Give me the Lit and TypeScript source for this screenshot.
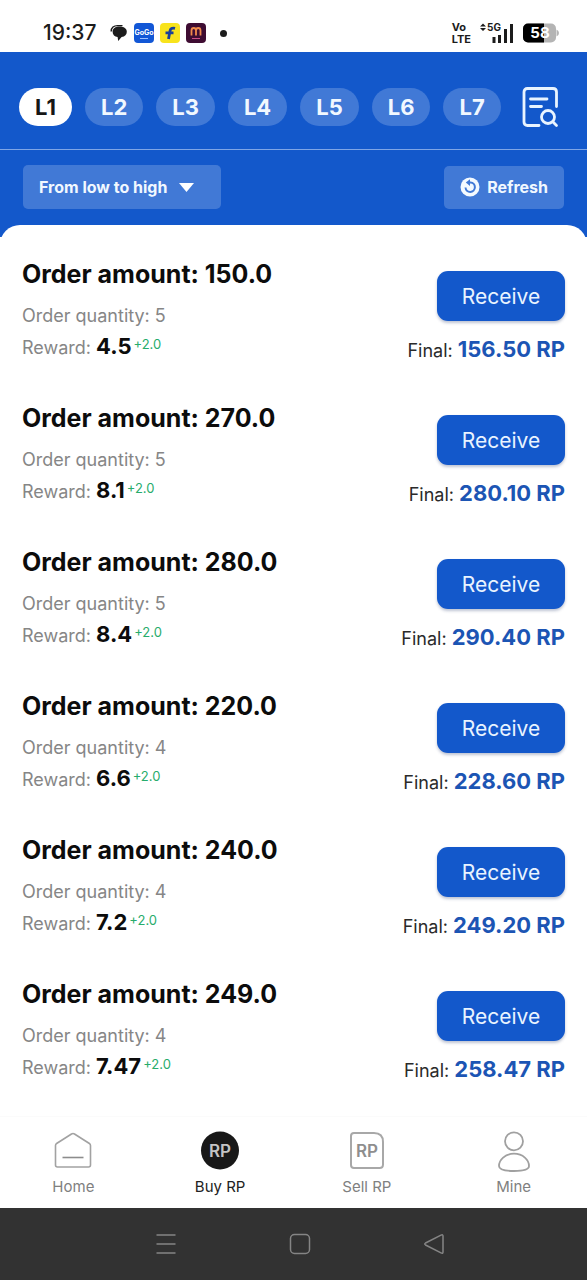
import { LitElement, html, css, svg } from "lit";
import { customElement, property, state } from "lit/decorators.js";
import { classMap } from "lit/directives/class-map.js";

interface Order {
  amount: string;
  quantity: number;
  reward: string;
  bonus: string;
  final: string;
}

const LEVELS = ["L1", "L2", "L3", "L4", "L5", "L6", "L7"];

const ORDERS: Order[] = [
  { amount: "150.0", quantity: 5, reward: "4.5", bonus: "+2.0", final: "156.50 RP" },
  { amount: "270.0", quantity: 5, reward: "8.1", bonus: "+2.0", final: "280.10 RP" },
  { amount: "280.0", quantity: 5, reward: "8.4", bonus: "+2.0", final: "290.40 RP" },
  { amount: "220.0", quantity: 4, reward: "6.6", bonus: "+2.0", final: "228.60 RP" },
  { amount: "240.0", quantity: 4, reward: "7.2", bonus: "+2.0", final: "249.20 RP" },
  { amount: "249.0", quantity: 4, reward: "7.47", bonus: "+2.0", final: "258.47 RP" },
];

@customElement("status-bar")
export class StatusBar extends LitElement {
  static styles = css`
    :host {
      display: flex;
      align-items: center;
      justify-content: space-between;
      height: 52px;
      padding: 14px 28px 0 43px;
      box-sizing: border-box;
      background: #fff;
      color: #1c1c1c;
    }
    .group {
      display: flex;
      align-items: center;
      gap: 6px;
    }
    .signals {
      gap: 8px;
    }
    .time {
      font-size: 21px;
      line-height: 24px;
      font-weight: 500;
      margin-right: 8px;
    }
    .dot {
      width: 7px;
      height: 7px;
      border-radius: 50%;
      background: #1c1c1c;
      margin-left: 8px;
    }
    .volte {
      display: flex;
      flex-direction: column;
      font-size: 11px;
      line-height: 12px;
      font-weight: 700;
    }
    svg {
      display: block;
    }
    text {
      font-family: Inter, sans-serif;
      font-weight: 700;
    }
  `;

  render() {
    return html`
      <div class="group">
        <span class="time">19:37</span>
        <svg width="18" height="20" viewBox="0 0 18 20" aria-hidden="true">
          <path d="M1.200 8.500C1 4.500 4 2.600 7.500 2.600h5" fill="none" stroke="#1c1c1c" stroke-width="1.400" />
          <path d="M9.500 3.600C5 3.600 2.600 5.800 2.600 8.800c0 3 2 5 5 5.300L8.200 18l3.400-3.900c3.400-.4 5.200-2.600 5.200-5.300 0-3-2.800-5.200-7.300-5.200z" fill="#1c1c1c" />
        </svg>
        <svg width="20" height="20" viewBox="0 0 20 20" aria-hidden="true">
          <rect width="20" height="20" rx="4" fill="#1257d6" />
          <text x="10" y="12" font-size="7" text-anchor="middle" fill="#fff">GoGo</text>
          <path d="M6 15.500h8" stroke="#9fc0ff" stroke-width="1" />
        </svg>
        <svg width="20" height="20" viewBox="0 0 20 20" aria-hidden="true">
          <rect width="20" height="20" rx="4" fill="#f8e31c" />
          <path d="M15 5.300C12 4.500 10.500 5.500 10 8L8.500 16M5.500 9.800h8" fill="none" stroke="#173f9b" stroke-width="2.800" />
        </svg>
        <svg width="20" height="20" viewBox="0 0 20 20" aria-hidden="true">
          <rect width="20" height="20" rx="4" fill="#3e0c32" />
          <path d="M5.500 12.500V7.500Q5.500 5 7.750 5T10 7.500V12.500M10 7.500Q10 5 12.250 5T14.500 7.500V12.500" fill="none" stroke="#f08a4b" stroke-width="1.800" />
          <path d="M6 15.500h8" stroke="#c94f86" stroke-width="1" />
        </svg>
        <span class="dot"></span>
      </div>
      <div class="group signals">
        <span class="volte"><span>Vo</span><span>LTE</span></span>
        <svg width="36" height="22" viewBox="0 0 36 22" aria-hidden="true">
          <path d="M4 1.500L7 4.500H1zM4 9L1 6H7z" fill="#1c1c1c" />
          <text x="8" y="9" font-size="10" fill="#1c1c1c">5G</text>
          <path d="M15 21v-6M20.500 21v-8M26.500 21V7M32.500 21V2" stroke="#1c1c1c" stroke-width="3" />
        </svg>
        <svg width="36" height="20" viewBox="0 0 36 20" aria-hidden="true">
          <rect x="0" y="0.500" width="33" height="19" rx="5" fill="#b4b4b4" />
          <path d="M33.500 6.500q2.500 1 2.500 3.500t-2.500 3.500z" fill="#b4b4b4" />
          <path d="M5 .5h16v19H5a5 5 0 0 1-5-5v-9a5 5 0 0 1 5-5z" fill="#000" />
          <text x="17" y="15" font-size="15" text-anchor="middle" fill="#fff">58</text>
        </svg>
      </div>
    `;
  }
}

@customElement("order-row")
export class OrderRow extends LitElement {
  @property({ attribute: false }) order!: Order;

  static styles = css`
    :host {
      display: flex;
      justify-content: space-between;
    }
    .info,
    .action {
      display: flex;
      flex-direction: column;
    }
    .title {
      margin: 0 0 10px;
      font-size: 25px;
      line-height: 32px;
      font-weight: 700;
      color: #0c0c0c;
    }
    .line {
      margin: 0;
      font-size: 18px;
      line-height: 32px;
      color: #868686;
    }
    .reward {
      font-size: 22px;
      line-height: 24px;
      font-weight: 700;
      color: #0c0c0c;
    }
    .bonus {
      margin-left: 2px;
      font-size: 13px;
      line-height: 16px;
      vertical-align: 5px;
      color: #27ac6c;
    }
    .action {
      align-items: flex-end;
      padding-top: 13px;
      gap: 14px;
    }
    .receive {
      width: 128px;
      height: 50px;
      border: 0;
      padding: 0;
      border-radius: 11px;
      background: #1358cb;
      box-shadow: 0 2px 3px rgba(40, 60, 110, 0.3);
      color: #e9f3ff;
      font: inherit;
      font-size: 21px;
      cursor: pointer;
    }
    .final {
      margin: 0;
      font-size: 18px;
      line-height: 32px;
      color: #2a2a2a;
    }
    .total {
      font-size: 22px;
      line-height: 24px;
      font-weight: 700;
      color: #1c55b4;
    }
  `;

  render() {
    const o = this.order;
    return html`
      <div class="info">
        <h2 class="title">Order amount: ${o.amount}</h2>
        <p class="line">Order quantity: ${o.quantity}</p>
        <p class="line">
          Reward: <span class="reward">${o.reward}</span><span class="bonus">${o.bonus}</span>
        </p>
      </div>
      <div class="action">
        <button class="receive" type="button">Receive</button>
        <p class="final">Final: <span class="total">${o.final}</span></p>
      </div>
    `;
  }
}

const NAV = [
  {
    label: "Home",
    icon: svg`<path d="M3.500 15.500Q3.500 14.200 4.600 13.500L19.500 4Q21 3.100 22.500 4L37.400 13.500Q38.500 14.200 38.500 15.500V35Q38.500 37 36.500 37H5.500Q3.500 37 3.500 35z" fill="none" stroke="#a2a2a2" stroke-width="1.600"/><path d="M10.500 27.500h21" stroke="#8c8c8c" stroke-width="1.600"/>`,
  },
  {
    label: "Buy RP",
    icon: svg`<circle cx="21" cy="20.500" r="19" fill="#181818"/><text class="rp" x="21" y="26.500" text-anchor="middle" fill="#c4c4c4">RP</text>`,
  },
  {
    label: "Sell RP",
    icon: svg`<path d="M8 3H28Q37 3 37 12V34.500Q37 38 33.500 38H8Q5 38 5 35V6Q5 3 8 3z" fill="none" stroke="#a8a8a8" stroke-width="2"/><text class="rp" x="21" y="26.500" text-anchor="middle" fill="#8e8e8e">RP</text>`,
  },
  {
    label: "Mine",
    icon: svg`<circle cx="21" cy="11.300" r="9" fill="none" stroke="#a0a0a0" stroke-width="1.800"/><path d="M21 23.700C12 23.700 6 30 6 36Q6 41 21 41T36 36C36 30 30 23.700 21 23.700z" fill="none" stroke="#a0a0a0" stroke-width="1.800"/>`,
  },
];

@customElement("app-root")
export class AppRoot extends LitElement {
  @state() private level = "L1";
  @state() private page = "Buy RP";

  static styles = css`
    :host {
      display: flex;
      flex-direction: column;
      min-height: 100vh;
      background: #fff;
      font-family: Inter, "Noto Sans", sans-serif;
    }
    button,
    select {
      border: 0;
      font: inherit;
      cursor: pointer;
    }
    svg {
      display: block;
    }
    .header {
      background: #1358cb;
      padding-bottom: 28px;
    }
    .levels {
      display: flex;
      align-items: center;
      justify-content: space-between;
      padding: 34px 28px 21px 19px;
      border-bottom: 1px solid #7fa5e6;
    }
    .tabs {
      display: flex;
      gap: 13px;
    }
    .tab {
      height: 38px;
      padding: 0 16px;
      border-radius: 19px;
      background: #4179d6;
      color: #f1f8ff;
      font-size: 22px;
      line-height: 38px;
      font-weight: 700;
    }
    .tab.active {
      background: #fff;
      color: #161616;
    }
    .records {
      padding: 0;
      background: none;
    }
    .tools {
      display: flex;
      align-items: center;
      justify-content: space-between;
      padding: 15px 23px 0;
    }
    .sort {
      position: relative;
    }
    .select {
      appearance: none;
      width: 198px;
      height: 44px;
      padding: 0 16px;
      border-radius: 5px;
      background: #4179d6;
      color: #f1f8ff;
      font-size: 16px;
      font-weight: 700;
    }
    .caret {
      position: absolute;
      right: 27px;
      top: 18px;
      pointer-events: none;
    }
    .refresh {
      display: flex;
      align-items: center;
      gap: 7px;
      height: 43px;
      padding: 0 16px;
      border-radius: 5px;
      background: #4179d6;
      color: #f1f8ff;
      font-size: 16px;
      font-weight: 700;
    }
    .orders {
      display: flex;
      flex: 1;
      flex-direction: column;
      gap: 35px;
      margin: -12px 0 0;
      padding: 33px 22px 29px;
      border-radius: 20px 20px 0 0;
      background: #fff;
    }
    .nav {
      display: grid;
      grid-template-columns: repeat(4, 1fr);
      height: 92px;
      border-top: 1px solid #fbfbfb;
      box-sizing: border-box;
    }
    .item {
      display: flex;
      flex-direction: column;
      align-items: center;
      gap: 5px;
      padding: 13px 0 0;
      background: none;
      color: #808080;
      font-size: 15px;
      line-height: 20px;
    }
    .item.active {
      color: #222;
    }
    .rp {
      font-size: 17px;
      font-weight: 600;
    }
    .system {
      display: flex;
      justify-content: center;
      gap: 112px;
      padding: 25px 0 25px 12px;
      background: #323232;
    }
    .key {
      padding: 0;
      background: none;
    }
  `;

  render() {
    return html`
      <status-bar></status-bar>
      <header class="header">
        <div class="levels">
          <div class="tabs">
            ${LEVELS.map(
              (l) => html`<button
                type="button"
                class=${classMap({ tab: true, active: l === this.level })}
                aria-pressed=${l === this.level}
                @click=${() => (this.level = l)}
              >${l}</button>`
            )}
          </div>
          <button class="records" type="button" aria-label="Order records">
            <svg width="38" height="42" viewBox="0 0 38 42" fill="none" stroke="#e9f4ff" stroke-width="2.800" stroke-linecap="round" stroke-linejoin="round">
              <path d="M18 39.500H6.500Q3 39.500 3 36V6Q3 2.500 6.500 2.500H32Q35.500 2.500 35.500 6V20.500" />
              <path d="M9.500 13H26M9.500 20.500H20.500" />
              <circle cx="27" cy="31" r="6.500" />
              <path d="M31.800 35.800L35.500 39.500" />
            </svg>
          </button>
        </div>
        <div class="tools">
          <div class="sort">
            <select class="select" aria-label="Sort orders">
              <option>From low to high</option>
              <option>From high to low</option>
            </select>
            <svg class="caret" width="15" height="9" viewBox="0 0 15 9" aria-hidden="true">
              <path d="M0 0H15L7.500 9z" fill="#fff" />
            </svg>
          </div>
          <button class="refresh" type="button">
            <svg width="20" height="20" viewBox="0 0 20 20" aria-hidden="true">
              <circle cx="10" cy="10" r="9.500" fill="#f4faff" />
              <path d="M8.500 5.500H10.500A4.700 4.700 0 1 1 5.500 10.500" fill="none" stroke="#4179d6" stroke-width="2" />
              <path d="M10 2.300V9L5.800 5.600z" fill="#4179d6" />
            </svg>
            Refresh
          </button>
        </div>
      </header>
      <main class="orders">
        ${ORDERS.map((o) => html`<order-row .order=${o}></order-row>`)}
      </main>
      <nav class="nav">
        ${NAV.map(
          (n) => html`<button
            type="button"
            class=${classMap({ item: true, active: n.label === this.page })}
            @click=${() => (this.page = n.label)}
          >
            <svg width="42" height="42" viewBox="0 0 42 42" aria-hidden="true">${n.icon}</svg>
            ${n.label}
          </button>`
        )}
      </nav>
      <footer class="system">
        <button class="key" type="button" aria-label="Recent apps">
          <svg width="22" height="22" viewBox="0 0 22 22" stroke="#858585" stroke-width="1.500">
            <path d="M1.500 2h19M1.500 11h19M1.500 20h19" />
          </svg>
        </button>
        <button class="key" type="button" aria-label="Home screen">
          <svg width="22" height="22" viewBox="0 0 22 22" fill="none" stroke="#858585" stroke-width="1.500">
            <rect x="1.500" y="1.500" width="19" height="19" rx="4" />
          </svg>
        </button>
        <button class="key" type="button" aria-label="Back">
          <svg width="22" height="22" viewBox="0 0 22 22" fill="none" stroke="#858585" stroke-width="1.500" stroke-linejoin="round">
            <path d="M18 2.200Q20 1.200 20 3V19Q20 21 18 19.900L2.500 12Q1 11 2.500 10z" />
          </svg>
        </button>
      </footer>
    `;
  }
}
